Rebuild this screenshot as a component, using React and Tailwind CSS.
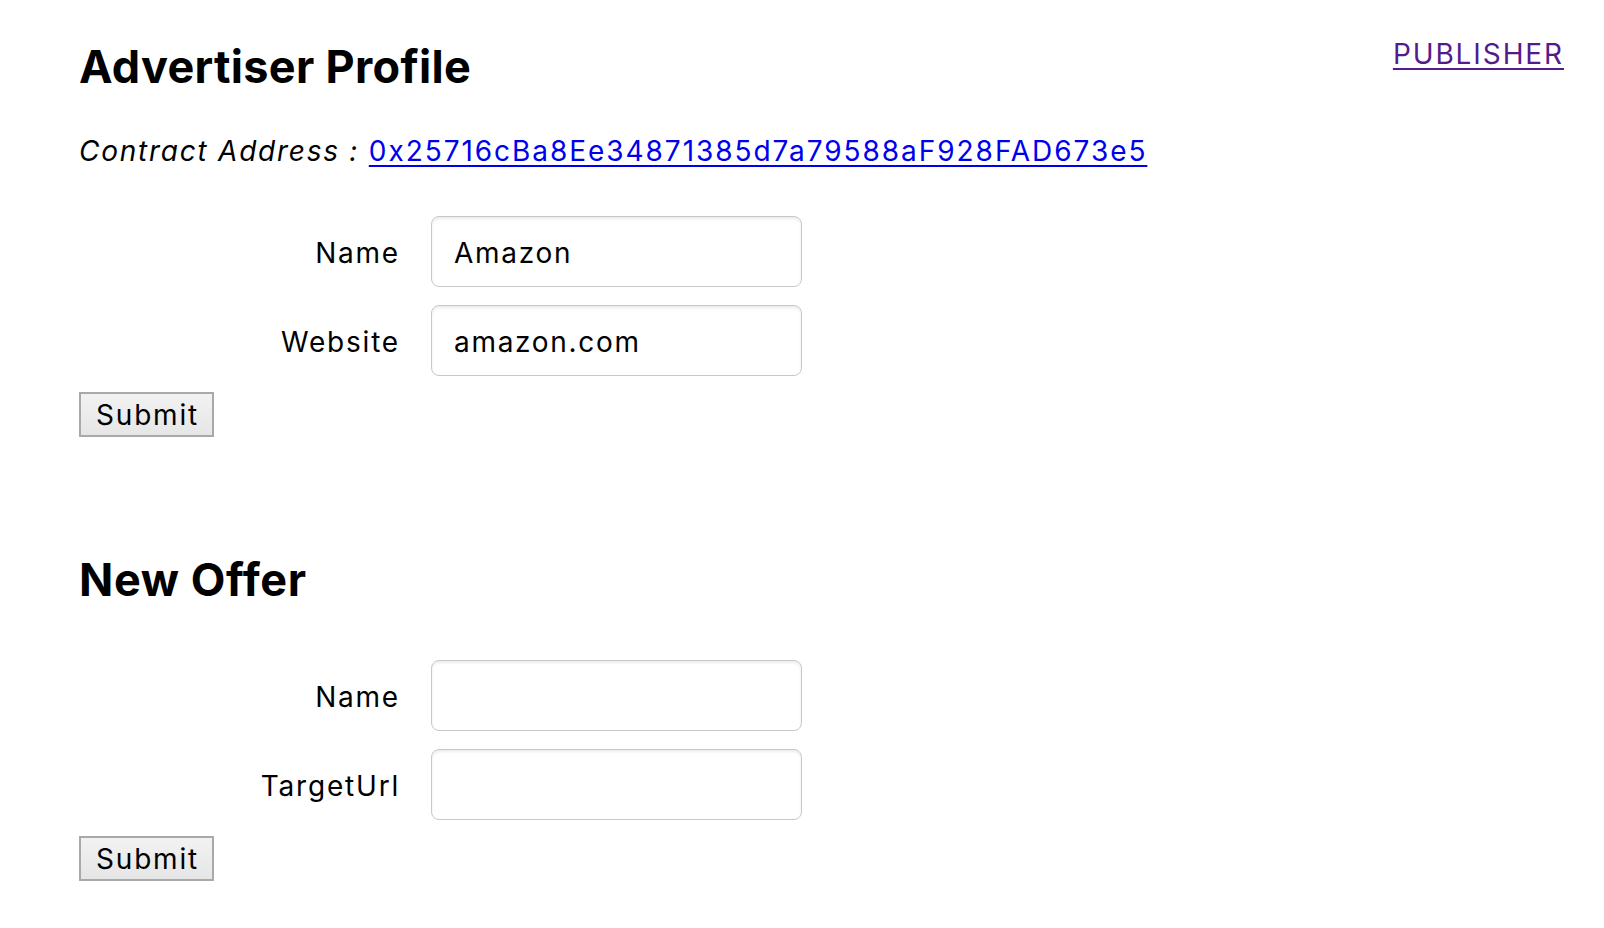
import React, { useState } from 'react';

const FieldRow = ({ label, value, onChange }) => (
  <div className="flex items-center">
    <label className="w-[321px] pt-[3px] text-right text-[28px] leading-none tracking-[1.8px] -mr-[1px]">{label}</label>
    <input
      type="text"
      value={value}
      onChange={e => onChange(e.target.value)}
      className="ml-[32px] w-[371px] h-[71px] rounded-[8px] border-[1.5px] border-[#c8c8c8] bg-white pl-[22px] pr-[20px] pt-[3px] text-[28px] tracking-[1.7px] text-black outline-none shadow-[inset_0_2px_3px_rgba(0,0,0,0.08)]"
    />
  </div>
);

const SubmitButton = () => (
  <button className="w-[135px] h-[45px] border-2 border-[#a9a9a9] bg-gradient-to-b from-[#f2f2f2] to-[#e6e6e6] pl-[2px] text-[28px] tracking-[1.8px] text-black leading-none">
    Submit
  </button>
);

const App = () => {
  const [name, setName] = useState('Amazon');
  const [website, setWebsite] = useState('amazon.com');
  const [offerName, setOfferName] = useState('');
  const [targetUrl, setTargetUrl] = useState('');

  return (
    <div className="min-h-screen bg-white text-black font-['Inter',_'Liberation_Sans',_sans-serif] pl-[79px] pr-[40px]">
      <div className="flex justify-between items-start">
        <h1 className="mt-[40px] text-[45px] leading-[54px] font-bold tracking-[0.3px]">Advertiser Profile</h1>
        <a href="#" className="mt-[37px] text-[28px] leading-[34px] tracking-[1.9px] text-[#551a8b] underline underline-offset-[4px]">PUBLISHER</a>
      </div>

      <p className="mt-[41px] text-[28px] leading-[32px]">
        <span className="italic tracking-[1.75px]">Contract Address : </span>
        <a href="#" className="text-[#0000ee] underline underline-offset-[4px] tracking-[1.95px]">0x25716cBa8Ee34871385d7a79588aF928FAD673e5</a>
      </p>

      <div className="mt-[49px] flex flex-col gap-[18px]">
        <FieldRow label="Name" value={name} onChange={setName} />
        <FieldRow label="Website" value={website} onChange={setWebsite} />
      </div>
      <div className="mt-[16px]">
        <SubmitButton />
      </div>

      <h1 className="mt-[116px] text-[45px] leading-[54px] font-bold tracking-[0.6px]">New Offer</h1>

      <div className="mt-[53px] flex flex-col gap-[18px]">
        <FieldRow label="Name" value={offerName} onChange={setOfferName} />
        <FieldRow label="TargetUrl" value={targetUrl} onChange={setTargetUrl} />
      </div>
      <div className="mt-[16px]">
        <SubmitButton />
      </div>
    </div>
  );
};

export default App;
